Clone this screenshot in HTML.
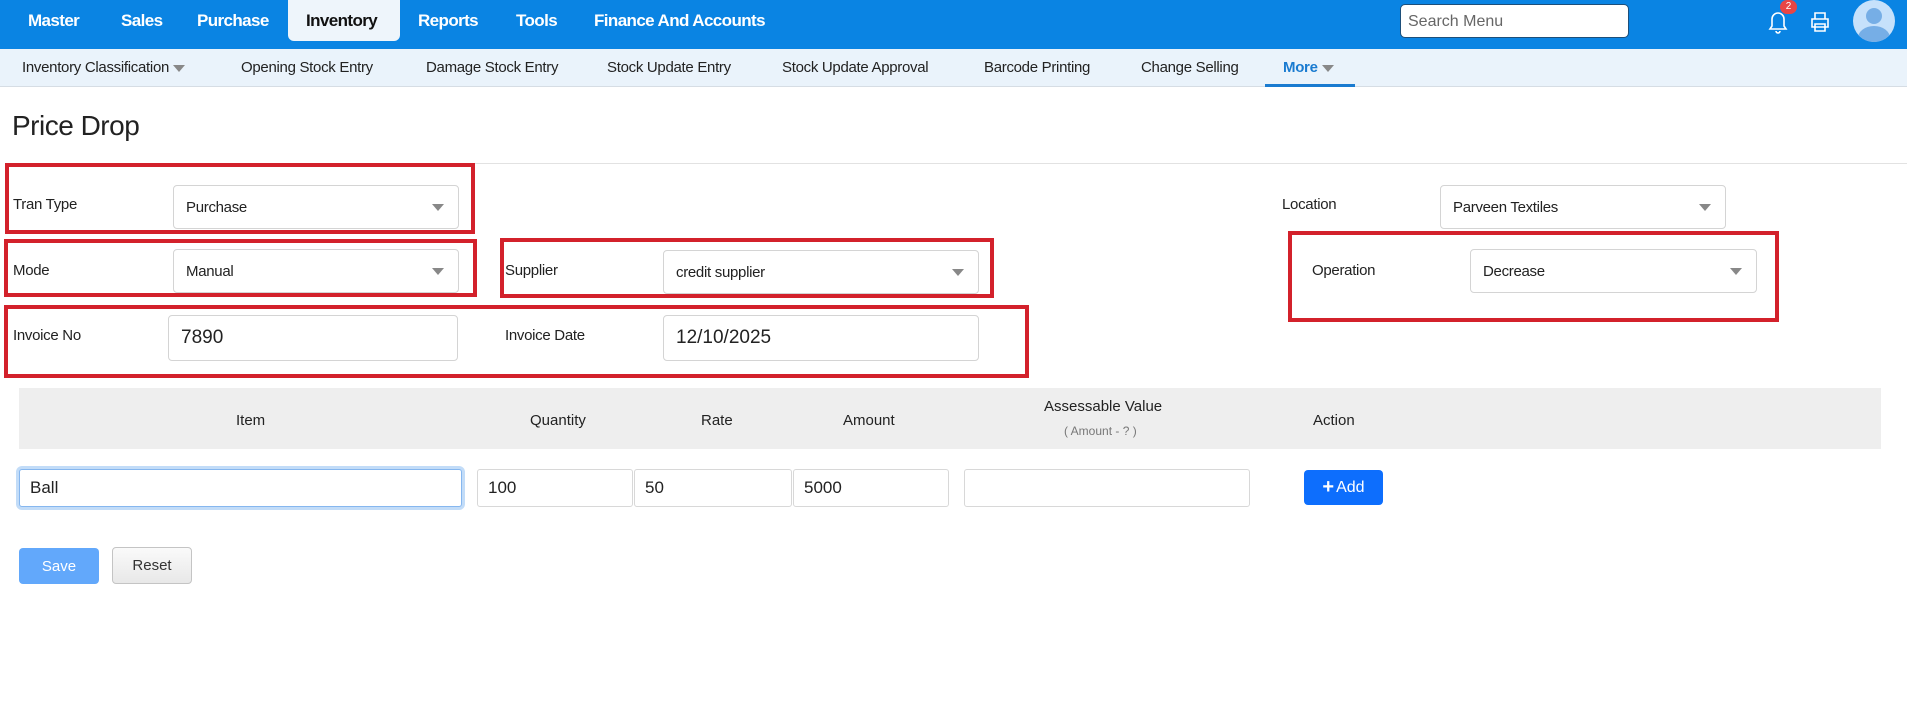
<!DOCTYPE html>
<html><head><meta charset="utf-8"><style>
*{box-sizing:border-box;margin:0;padding:0}
body{width:1907px;height:711px;background:#fff;font-family:"Liberation Sans",sans-serif;color:#222;position:relative;overflow:hidden}
.a{position:absolute}
.top{left:0;top:0;width:1907px;height:49px;background:#0a84e3}
.nv{top:11px;color:#fff;font-weight:bold;font-size:17px;letter-spacing:-0.6px}
.sub{left:0;top:49px;width:1907px;height:38px;background:#eaf3fb;border-bottom:1px solid #d6dde4}
.si{top:59px;font-size:15px;color:#222;letter-spacing:-0.3px}
.lbl{font-size:15px;color:#222;letter-spacing:-0.3px}
.sel{border:1px solid #d4d4d4;border-radius:4px;background:#fff;font-size:15px;padding-left:12px;display:flex;align-items:center;letter-spacing:-0.3px}
.sel:after{content:"";position:absolute;right:14px;top:50%;margin-top:-3px;border-left:6px solid transparent;border-right:6px solid transparent;border-top:7px solid #888}
.red{border:4px solid #d3212b}
.inp{border:1px solid #d4d4d4;border-radius:4px;background:#fff;display:flex;align-items:center;padding-left:12px;font-size:19px}
.th{top:412px;font-size:15px;color:#222}
.ti{top:469px;height:38px;border:1px solid #d8d8d8;border-radius:3px;background:#fff;font-size:17px;display:flex;align-items:center;padding-left:10px}
</style></head><body>
<div class="a top"></div>
<div class="a nv" style="left:28px">Master</div>
<div class="a nv" style="left:121px">Sales</div>
<div class="a nv" style="left:197px">Purchase</div>
<div class="a" style="left:288px;top:0;width:112px;height:41px;background:#eef5fb;border-radius:0 0 6px 6px"></div>
<div class="a nv" style="left:306px;color:#111">Inventory</div>
<div class="a nv" style="left:418px">Reports</div>
<div class="a nv" style="left:516px">Tools</div>
<div class="a nv" style="left:594px">Finance And Accounts</div>
<div class="a" style="left:1400px;top:4px;width:229px;height:34px;background:#fff;border:1px solid #1d4f7a;border-radius:5px;font-size:16px;color:#666;padding:8px 7px">Search Menu</div>
<svg class="a" style="left:1765px;top:8px" width="26" height="28" viewBox="0 0 26 28"><path d="M5 21h16l-2-3v-7a6 6 0 0 0-12 0v7z M11 23a2 2 0 0 0 4 0" fill="none" stroke="#fff" stroke-width="1.6"/></svg>
<div class="a" style="left:1780px;top:0;width:17px;height:14px;background:#e84545;border-radius:8px;color:#fff;font-size:10px;text-align:center;line-height:14px">2</div>
<svg class="a" style="left:1808px;top:10px" width="24" height="24" viewBox="0 0 24 24"><path d="M7 9V3h10v6 M4 9h16v8H4z M7 14h10v7H7z" fill="none" stroke="#fff" stroke-width="1.6"/></svg>
<div class="a" style="left:1853px;top:0;width:42px;height:42px;border-radius:50%;background:#c6e1fb;overflow:hidden"><div class="a" style="left:13px;top:8px;width:16px;height:16px;border-radius:50%;background:#76aee6"></div><div class="a" style="left:5px;top:26px;width:32px;height:24px;border-radius:50%;background:#76aee6"></div></div>
<div class="a sub"></div>
<div class="a si" style="left:22px">Inventory Classification <span style="display:inline-block;border-left:6px solid transparent;border-right:6px solid transparent;border-top:7px solid #888;vertical-align:middle"></span></div>
<div class="a si" style="left:241px">Opening Stock Entry</div>
<div class="a si" style="left:426px">Damage Stock Entry</div>
<div class="a si" style="left:607px">Stock Update Entry</div>
<div class="a si" style="left:782px">Stock Update Approval</div>
<div class="a si" style="left:984px">Barcode Printing</div>
<div class="a si" style="left:1141px">Change Selling</div>
<div class="a si" style="left:1283px;color:#1a7bd0;font-weight:bold">More <span style="display:inline-block;border-left:6px solid transparent;border-right:6px solid transparent;border-top:7px solid #888;vertical-align:middle"></span></div>
<div class="a" style="left:1265px;top:84px;width:90px;height:3px;background:#1a7bd0"></div>
<div class="a" style="left:12px;top:110px;font-size:28px;color:#222;letter-spacing:-0.5px">Price Drop</div>
<div class="a" style="left:12px;top:163px;width:1895px;height:1px;background:#e2e2e2"></div>

<div class="a red" style="left:5px;top:163px;width:470px;height:71px"></div>
<div class="a lbl" style="left:13px;top:196px">Tran Type</div>
<div class="a sel" style="left:173px;top:185px;width:286px;height:44px">Purchase</div>
<div class="a lbl" style="left:1282px;top:196px">Location</div>
<div class="a sel" style="left:1440px;top:185px;width:286px;height:44px">Parveen Textiles</div>

<div class="a red" style="left:4px;top:239px;width:473px;height:58px"></div>
<div class="a lbl" style="left:13px;top:262px">Mode</div>
<div class="a sel" style="left:173px;top:249px;width:286px;height:44px">Manual</div>
<div class="a red" style="left:500px;top:238px;width:494px;height:60px"></div>
<div class="a lbl" style="left:505px;top:262px">Supplier</div>
<div class="a sel" style="left:663px;top:250px;width:316px;height:44px">credit supplier</div>
<div class="a red" style="left:1288px;top:231px;width:491px;height:91px"></div>
<div class="a lbl" style="left:1312px;top:262px">Operation</div>
<div class="a sel" style="left:1470px;top:249px;width:287px;height:44px">Decrease</div>

<div class="a red" style="left:4px;top:305px;width:1025px;height:73px"></div>
<div class="a lbl" style="left:13px;top:327px">Invoice No</div>
<div class="a inp" style="left:168px;top:315px;width:290px;height:46px">7890</div>
<div class="a lbl" style="left:505px;top:327px">Invoice Date</div>
<div class="a inp" style="left:663px;top:315px;width:316px;height:46px">12/10/2025</div>

<div class="a" style="left:19px;top:388px;width:1862px;height:61px;background:#eeeeee"></div>
<div class="a th" style="left:236px">Item</div>
<div class="a th" style="left:530px">Quantity</div>
<div class="a th" style="left:701px">Rate</div>
<div class="a th" style="left:843px">Amount</div>
<div class="a th" style="left:1044px;top:398px">Assessable Value</div>
<div class="a" style="left:1064px;top:424px;font-size:12px;color:#777">( Amount - ? )</div>
<div class="a th" style="left:1313px">Action</div>

<div class="a ti" style="left:19px;width:443px;border:1px solid #86b7ef;box-shadow:0 0 0 3px #c2dcf8">Ball</div>
<div class="a ti" style="left:477px;width:156px">100</div>
<div class="a ti" style="left:634px;width:158px">50</div>
<div class="a ti" style="left:793px;width:156px">5000</div>
<div class="a ti" style="left:964px;width:286px"></div>
<div class="a" style="left:1304px;top:470px;width:79px;height:35px;background:#0d6efd;border-radius:4px;color:#fff;font-size:16px;display:flex;align-items:center;justify-content:center"><b style="font-size:20px;margin-right:2px">+</b>Add</div>

<div class="a" style="left:19px;top:548px;width:80px;height:36px;background:#62a8fb;border-radius:4px;color:#fff;font-size:15px;display:flex;align-items:center;justify-content:center">Save</div>
<div class="a" style="left:112px;top:547px;width:80px;height:37px;background:linear-gradient(#fafafa,#e8e8e8);border:1px solid #c4c4c4;border-radius:4px;color:#333;font-size:15px;display:flex;align-items:center;justify-content:center">Reset</div>
</body></html>
